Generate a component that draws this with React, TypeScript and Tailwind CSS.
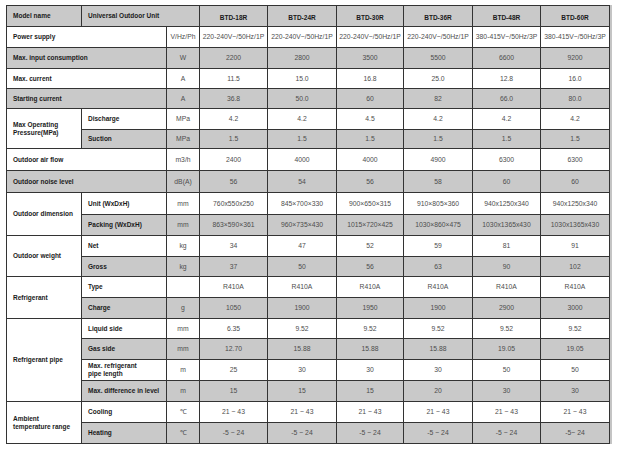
import React from "react";

type Row = {
  group?: { label: React.ReactNode; span: number };
  label: React.ReactNode;
  labelSpan2?: boolean;
  unit: string;
  values: string[];
  gray: boolean;
  h: number;
};

const models = ["BTD-18R", "BTD-24R", "BTD-30R", "BTD-36R", "BTD-48R", "BTD-60R"];

const rows: Row[] = [
  { label: "Power supply", labelSpan2: true, unit: "V/Hz/Ph", values: ["220-240V~/50Hz/1P", "220-240V~/50Hz/1P", "220-240V~/50Hz/1P", "220-240V~/50Hz/1P", "380-415V~/50Hz/3P", "380-415V~/50Hz/3P"], gray: false, h: 21 },
  { label: "Max. input consumption", labelSpan2: true, unit: "W", values: ["2200", "2800", "3500", "5500", "6600", "9200"], gray: true, h: 21 },
  { label: "Max. current", labelSpan2: true, unit: "A", values: ["11.5", "15.0", "16.8", "25.0", "12.8", "16.0"], gray: false, h: 20 },
  { label: "Starting current", labelSpan2: true, unit: "A", values: ["36.8", "50.0", "60", "82", "66.0", "80.0"], gray: true, h: 20 },
  { group: { label: <>Max Operating<br />Pressure(MPa)</>, span: 2 }, label: "Discharge", unit: "MPa", values: ["4.2", "4.2", "4.5", "4.2", "4.2", "4.2"], gray: false, h: 21 },
  { label: "Suction", unit: "MPa", values: ["1.5", "1.5", "1.5", "1.5", "1.5", "1.5"], gray: true, h: 19 },
  { label: "Outdoor air flow", labelSpan2: true, unit: "m3/h", values: ["2400", "4000", "4000", "4900", "6300", "6300"], gray: false, h: 22 },
  { label: "Outdoor noise level", labelSpan2: true, unit: "dB(A)", values: ["56", "54", "56", "58", "60", "60"], gray: true, h: 22 },
  { group: { label: "Outdoor dimension", span: 2 }, label: "Unit (WxDxH)", unit: "mm", values: ["760x550x250", "845×700×330", "900×650×315", "910×805×360", "940x1250x340", "940x1250x340"], gray: false, h: 22 },
  { label: "Packing (WxDxH)", unit: "mm", values: ["863×590×361", "960×735×430", "1015×720×425", "1030×860×475", "1030x1365x430", "1030x1365x430"], gray: true, h: 21 },
  { group: { label: "Outdoor weight", span: 2 }, label: "Net", unit: "kg", values: ["34", "47", "52", "59", "81", "91"], gray: false, h: 21 },
  { label: "Gross", unit: "kg", values: ["37", "50", "56", "63", "90", "102"], gray: true, h: 20 },
  { group: { label: "Refrigerant", span: 2 }, label: "Type", unit: "", values: ["R410A", "R410A", "R410A", "R410A", "R410A", "R410A"], gray: false, h: 21 },
  { label: "Charge", unit: "g", values: ["1050", "1900", "1950", "1900", "2900", "3000"], gray: true, h: 21 },
  { group: { label: "Refrigerant pipe", span: 4 }, label: "Liquid side", unit: "mm", values: ["6.35", "9.52", "9.52", "9.52", "9.52", "9.52"], gray: false, h: 20 },
  { label: "Gas side", unit: "mm", values: ["12.70", "15.88", "15.88", "15.88", "19.05", "19.05"], gray: true, h: 21 },
  { label: <>Max. refrigerant<br />pipe length</>, unit: "m", values: ["25", "30", "30", "30", "50", "50"], gray: false, h: 21 },
  { label: "Max. difference in level", unit: "m", values: ["15", "15", "15", "20", "30", "30"], gray: true, h: 21 },
  { group: { label: <>Ambient<br />temperature range</>, span: 2 }, label: "Cooling", unit: "℃", values: ["21 ~ 43", "21 ~ 43", "21 ~ 43", "21 ~ 43", "21 ~ 43", "21 ~ 43"], gray: false, h: 21 },
  { label: "Heating", unit: "℃", values: ["-5 ~ 24", "-5 ~ 24", "-5 ~ 24", "-5 ~ 24", "-5 ~ 24", "-5~ 24"], gray: true, h: 21 },
];

const cell = "border-[1.5px] border-[#333333] p-0 align-middle";
const lbl = "text-[6.5px] font-bold text-[#1a1a1a] leading-[8px] text-left pl-[6px] pr-[2px]";
const val = "text-[6.8px] text-[#4d4d4d] leading-[8px] text-center";

export default function App() {
  return (
    <div className="w-[618px] h-[452px] bg-white pt-[5px] pl-[6px] font-['Liberation_Sans',Arial,sans-serif]">
      <table className="table-fixed border-collapse w-[603px] shadow-[2px_0_0_#c4c4c4]">
        <colgroup>
          <col className="w-[75px]" />
          <col className="w-[85px]" />
          <col className="w-[33px]" />
          <col className="w-[68px]" />
          <col className="w-[69px]" />
          <col className="w-[67px]" />
          <col className="w-[69px]" />
          <col className="w-[68px]" />
          <col className="w-[69px]" />
        </colgroup>
        <tbody>
          <tr className="h-[21px] bg-[#c9c9c9]">
            <td className={`${cell} ${lbl}`}>Model name</td>
            <td className={`${cell} ${lbl}`} colSpan={2}>Universal Outdoor Unit</td>
            {models.map((m) => (
              <td key={m} className={`${cell} text-[6.5px] font-bold text-[#1a1a1a] leading-[8px] text-center pt-[3px]`}>{m}</td>
            ))}
          </tr>
          {rows.map((r, i) => {
            const bg = r.gray ? "bg-[#c9c9c9]" : "bg-white";
            return (
              <tr key={i} style={{ height: r.h }}>
                {r.group && (
                  <td className={`${cell} ${lbl} bg-white`} rowSpan={r.group.span}>
                    {r.group.label}
                  </td>
                )}
                {r.labelSpan2 ? (
                  <td className={`${cell} ${lbl} ${bg}`} colSpan={2}>{r.label}</td>
                ) : (
                  <td className={`${cell} ${lbl} ${bg}`}>{r.label}</td>
                )}
                <td className={`${cell} ${val} ${bg}`}>{r.unit}</td>
                {r.values.map((v, j) => (
                  <td key={j} className={`${cell} ${val} ${bg}`}>{v}</td>
                ))}
              </tr>
            );
          })}
        </tbody>
      </table>
    </div>
  );
}
